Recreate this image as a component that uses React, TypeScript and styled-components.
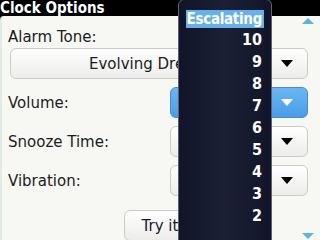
import styled, { createGlobalStyle } from "styled-components";

const GlobalStyle = createGlobalStyle`
  html, body {
    margin: 0;
    padding: 0;
  }
  body {
    width: 320px;
    height: 240px;
    overflow: hidden;
    background: #000;
    font-family: "DejaVu Sans", "Liberation Sans", sans-serif;
  }
`;

const Screen = styled.div`
  position: relative;
  width: 320px;
  height: 240px;
  display: flex;
  flex-direction: column;
  overflow: hidden;
`;

const TitleBar = styled.div`
  flex: 0 0 16px;
  background: #000;
  color: #fff;
  font-family: "DejaVu Sans Condensed", "DejaVu Sans", sans-serif;
  font-stretch: condensed;
  font-weight: bold;
  font-size: 15px;
  line-height: 16px;
  white-space: nowrap;
`;

const Panel = styled.div`
  flex: 1;
  background: #f7f8f3;
  border-left: 2px solid #e2ebe2;
  border-top-left-radius: 4px;
  padding: 12px 12px 0 6px;
  display: flex;
  flex-direction: column;
`;

const Label = styled.div`
  font-size: 15px;
  line-height: 18px;
  color: #1c1c1c;
  white-space: nowrap;
`;

const Row = styled.div`
  display: flex;
  align-items: center;
  justify-content: space-between;
  margin-top: 8px;
`;

const Select = styled.div<{ $active?: boolean; $full?: boolean }>`
  box-sizing: border-box;
  height: 31px;
  width: ${p => (p.$full ? "auto" : "138px")};
  margin-left: ${p => (p.$full ? "2px" : "0")};
  margin-top: ${p => (p.$full ? "2px" : "0")};
  border-radius: 6px;
  border: 1px solid ${p => (p.$active ? "#3f8fd8" : "#c9cbc6")};
  background: ${p =>
    p.$active
      ? "linear-gradient(#6bb6f2, #4a9de6)"
      : "linear-gradient(#ffffff, #ecedea)"};
  display: flex;
  align-items: center;
  font-size: 15px;
  color: #1c1c1c;
  white-space: nowrap;
  overflow: hidden;
`;

const SelectText = styled.span`
  flex: 1;
  padding-left: 78px;
`;

const Arrow = styled.span<{ $light?: boolean }>`
  width: 0;
  height: 0;
  margin-right: 14px;
  border-left: 6px solid transparent;
  border-right: 6px solid transparent;
  border-top: 7px solid ${p => (p.$light ? "#fff" : "#000")};
`;

const ButtonRow = styled.div`
  display: flex;
  justify-content: center;
  margin-top: 14px;
  padding-left: 4px;
`;

const PushButton = styled.div`
  box-sizing: border-box;
  width: 72px;
  height: 31px;
  border-radius: 6px;
  border: 1px solid #c9cbc6;
  background: linear-gradient(#ffffff, #ecedea);
  font-size: 15px;
  color: #1c1c1c;
  display: flex;
  align-items: center;
  justify-content: center;
`;

const Popup = styled.div`
  position: absolute;
  left: 178px;
  top: -1px;
  width: 94px;
  height: 250px;
  box-sizing: border-box;
  border: 1px solid #5e626c;
  border-radius: 6px;
  background: linear-gradient(90deg, #12152a 0%, #1b2034 50%, #12152a 100%);
  padding: 10px 7px 0 0;
  display: flex;
  flex-direction: column;
  align-items: flex-end;
  font-family: "DejaVu Sans Condensed", "DejaVu Sans", sans-serif;
  font-stretch: condensed;
`;

const Option = styled.div<{ $selected?: boolean }>`
  height: ${p => (p.$selected ? "18px" : "22px")};
  line-height: ${p => (p.$selected ? "18px" : "23px")};
  font-size: ${p => (p.$selected ? "15px" : "16px")};
  letter-spacing: ${p => (p.$selected ? "-0.3px" : "0")};
  font-weight: bold;
  color: #fff;
  padding: 0 2px 0 1px;
  background: ${p => (p.$selected ? "#66b0ec" : "transparent")};
  white-space: nowrap;
`;

const ScrollArrow = styled.div<{ $down?: boolean }>`
  position: absolute;
  right: 6px;
  ${p => (p.$down ? "bottom: 1px;" : "top: 18px;")}
  width: 0;
  height: 0;
  border-left: 6px solid transparent;
  border-right: 6px solid transparent;
  ${p =>
    p.$down
      ? "border-top: 6px solid #5ab4e4;"
      : "border-bottom: 6px solid #5ab4e4;"}
`;

const options = ["10", "9", "8", "7", "6", "5", "4", "3", "2"];

const App = () => {
  return (
    <Screen>
      <GlobalStyle />
      <TitleBar>Clock Options</TitleBar>
      <Panel>
        <Label>Alarm Tone:</Label>
        <Select $full>
          <SelectText>Evolving Dreams</SelectText>
          <Arrow />
        </Select>
        <Row>
          <Label>Volume:</Label>
          <Select $active>
            <SelectText />
            <Arrow $light />
          </Select>
        </Row>
        <Row>
          <Label>Snooze Time:</Label>
          <Select>
            <SelectText />
            <Arrow />
          </Select>
        </Row>
        <Row>
          <Label>Vibration:</Label>
          <Select>
            <SelectText />
            <Arrow />
          </Select>
        </Row>
        <ButtonRow>
          <PushButton>Try it</PushButton>
        </ButtonRow>
      </Panel>
      <ScrollArrow />
      <ScrollArrow $down />
      <Popup>
        <Option $selected>Escalating</Option>
        {options.map(o => (
          <Option key={o}>{o}</Option>
        ))}
      </Popup>
    </Screen>
  );
};

export default App;
